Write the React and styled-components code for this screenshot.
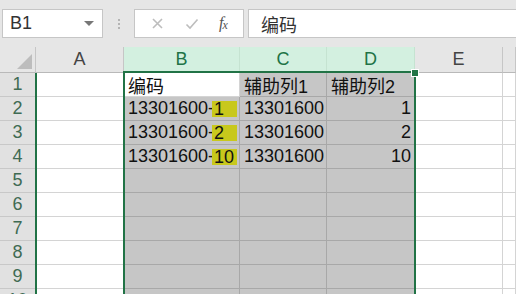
import React from "react";
import styled, { createGlobalStyle } from "styled-components";

const GlobalStyle = createGlobalStyle`
  html, body {
    margin: 0;
    padding: 0;
    background: #ffffff;
    overflow: hidden;
  }
  body {
    font-family: "Liberation Sans", "Noto Sans CJK SC", sans-serif;
  }
`;

const GREEN = "#217346";

const columns = [
  { key: "A", width: 88 },
  { key: "B", width: 116, selected: true },
  { key: "C", width: 87, selected: true },
  { key: "D", width: 88, selected: true },
  { key: "E", width: 88 },
  { key: "", width: 13 },
];

const data = [
  ["", { text: "编码" }, { text: "辅助列1" }, { text: "辅助列2" }, "", ""],
  ["", { text: "13301600-", mark: "1" }, { text: "13301600" }, { text: "1", right: true }, "", ""],
  ["", { text: "13301600-", mark: "2" }, { text: "13301600" }, { text: "2", right: true }, "", ""],
  ["", { text: "13301600-", mark: "10" }, { text: "13301600" }, { text: "10", right: true }, "", ""],
];

const Page = styled.div`
  width: 516px;
  height: 294px;
  overflow: hidden;
  background: #ffffff;
`;

const Toolbar = styled.div`
  height: 47px;
  background: #e6e6e6;
  display: flex;
  align-items: center;
  padding: 0 0 0 2px;
  box-sizing: border-box;
`;

const NameBox = styled.div`
  width: 101px;
  height: 29px;
  box-sizing: border-box;
  background: #fff;
  border: 1px solid #c6c6c6;
  display: flex;
  align-items: center;
  justify-content: space-between;
  padding: 0 8px 0 7px;
  font-size: 18px;
  color: #333;
`;

const Caret = styled.span`
  width: 0;
  height: 0;
  border-left: 5px solid transparent;
  border-right: 5px solid transparent;
  border-top: 5px solid #777;
`;

const Dots = styled.div`
  width: 31px;
  display: flex;
  flex-direction: column;
  align-items: center;
  gap: 2px;
  span {
    width: 2px;
    height: 2px;
    background: #b4b4b4;
  }
`;

const FxBox = styled.div`
  width: 110px;
  height: 29px;
  box-sizing: border-box;
  background: #fff;
  border: 1px solid #c6c6c6;
  display: flex;
  align-items: center;
  justify-content: space-around;
  padding: 0 6px;
`;

const Fx = styled.span`
  font-family: "Liberation Serif", serif;
  font-style: italic;
  font-size: 16px;
  color: #555;
  letter-spacing: -1px;
  sub {
    font-size: 12px;
    vertical-align: -1px;
  }
`;

const FormulaInput = styled.div`
  flex: 1;
  margin-left: 4px;
  height: 29px;
  box-sizing: border-box;
  background: #fff;
  border: 1px solid #c6c6c6;
  border-right: none;
  display: flex;
  align-items: center;
  padding-left: 12px;
  font-family: "Noto Sans CJK SC", sans-serif;
  font-size: 18px;
  color: #333;
`;

const Grid = styled.div`
  display: grid;
  grid-template-columns: 36px ${columns.map((c) => c.width + "px").join(" ")};
  grid-template-rows: 26px repeat(10, 24px);
`;

const Corner = styled.div`
  grid-row: 1;
  grid-column: 1;
  background: #e6e6e6;
  border-right: 1px solid #c6c6c6;
  border-bottom: 1px solid #b9b9b9;
  box-sizing: border-box;
  position: relative;
  &::after {
    content: "";
    position: absolute;
    right: 3px;
    bottom: 3px;
    border-left: 15px solid transparent;
    border-bottom: 15px solid #bdbdbd;
  }
`;

const ColHead = styled.div`
  grid-row: 1;
  grid-column: ${(p) => p.$col};
  background: ${(p) => (p.$selected ? "#d3f0e0" : "#e6e6e6")};
  color: ${(p) => (p.$selected ? GREEN : "#444")};
  border-right: 1px solid ${(p) => (p.$selected ? "#c5e3d1" : "#c6c6c6")};
  border-bottom: 1px solid #b9b9b9;
  box-sizing: border-box;
  display: flex;
  align-items: center;
  justify-content: center;
  font-size: 18px;
`;

const RowHead = styled.div`
  grid-column: 1;
  grid-row: ${(p) => p.$row};
  background: #e1e1e1;
  color: #3f6b53;
  border-right: 1px solid #b9b9b9;
  border-bottom: 1px solid #c8c8c8;
  box-sizing: border-box;
  display: flex;
  align-items: center;
  justify-content: center;
  font-size: 18px;
`;

const Cell = styled.div`
  grid-row: ${(p) => p.$row};
  grid-column: ${(p) => p.$col};
  background: ${(p) => (p.$selected ? "#c6c6c6" : "#fff")};
  border-right: 1px solid ${(p) => (p.$selected ? "#a8a8a8" : "#d4d4d4")};
  border-bottom: 1px solid ${(p) => (p.$selected ? "#a8a8a8" : "#d4d4d4")};
  box-sizing: border-box;
  display: flex;
  align-items: center;
  justify-content: ${(p) => (p.$right ? "flex-end" : "flex-start")};
  padding: 0 3px 0 4px;
  font-size: 18px;
  color: #111;
  white-space: nowrap;
  overflow: hidden;
  font-family: "Liberation Sans", "Noto Sans CJK SC", sans-serif;
`;

/* yellow marker stroke behind the trailing number */
const Mark = styled.span`
  flex: 1;
  align-self: center;
  height: 16px;
  line-height: 16px;
  display: flex;
  align-items: center;
  justify-content: flex-start;
  background: #c8c81c;
  margin-left: -2px;
  padding-left: 2px;
  margin-right: -1px;
  position: relative;
  z-index: 0;
`;

const Selection = styled.div`
  grid-column: 3 / 6;
  grid-row: 2 / -1;
  margin-top: -2px;
  margin-left: -1px;
  margin-right: -1px;
  border: 2px solid ${GREEN};
  border-bottom: none;
  pointer-events: none;
  position: relative;
  &::after {
    content: "";
    position: absolute;
    right: -5px;
    top: -4px;
    width: 6px;
    height: 6px;
    background: ${GREEN};
    border: 1px solid #fff;
  }
`;

const LeftLine = styled.div`
  grid-column: 2;
  grid-row: 2 / -1;
  margin-left: -1px;
  border-left: 2px solid ${GREEN};
  pointer-events: none;
`;

export default function App() {
  return (
    <Page>
      <GlobalStyle />
      <Toolbar>
        <NameBox>
          B1
          <Caret />
        </NameBox>
        <Dots>
          <span />
          <span />
          <span />
        </Dots>
        <FxBox>
          <svg width="13" height="13" viewBox="0 0 13 13">
            <path d="M2 2 L11 11 M11 2 L2 11" stroke="#bdbdbd" strokeWidth="1.6" fill="none" />
          </svg>
          <svg width="14" height="12" viewBox="0 0 14 12">
            <path d="M1.5 6.5 L5 10 L12.5 1.5" stroke="#bdbdbd" strokeWidth="1.6" fill="none" />
          </svg>
          <Fx>
            f<sub>x</sub>
          </Fx>
        </FxBox>
        <FormulaInput>编码</FormulaInput>
      </Toolbar>
      <Grid>
        <Corner />
        {columns.map((c, i) => (
          <ColHead key={i} $col={i + 2} $selected={c.selected}>
            {c.key}
          </ColHead>
        ))}
        {Array.from({ length: 10 }).map((_, r) => (
          <React.Fragment key={r}>
            <RowHead $row={r + 2}>{r + 1}</RowHead>
            {columns.map((c, ci) => {
              const v = (data[r] && data[r][ci]) || null;
              const active = r === 0 && ci === 1;
              return (
                <Cell
                  key={ci}
                  $row={r + 2}
                  $col={ci + 2}
                  $selected={c.selected && !active}
                  $right={v && v.right}
                >
                  {v && v.text}
                  {v && v.mark && <Mark>{v.mark}</Mark>}
                </Cell>
              );
            })}
          </React.Fragment>
        ))}
        <LeftLine />
        <Selection />
      </Grid>
    </Page>
  );
}
